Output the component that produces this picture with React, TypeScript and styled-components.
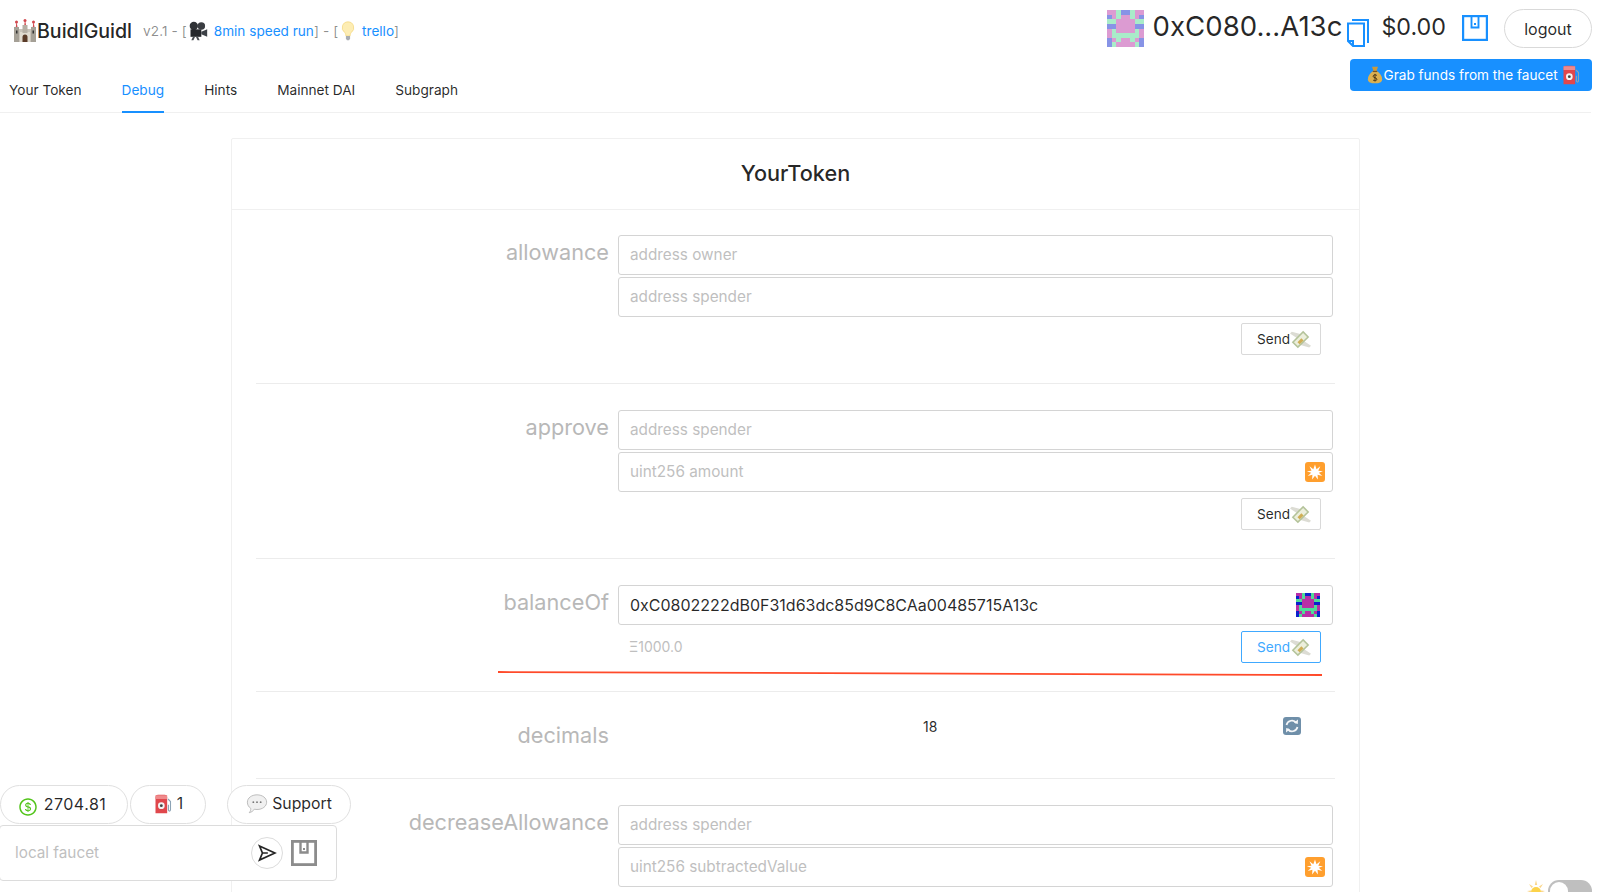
import React from "react";
import styled, { createGlobalStyle } from "styled-components";
import { AiOutlineDollarCircle } from "react-icons/ai";

const Global = createGlobalStyle`
  html, body { margin: 0; padding: 0; height: 892px; overflow: hidden; background: #fff; }
  body { font-family: Inter, "Liberation Sans", sans-serif; font-size: 14px; color: rgba(0,0,0,.85); }
  * { box-sizing: border-box; }
  input::placeholder { color: #bfbfbf; opacity: 1; font-size: 15.3px; }
`;

const Page = styled.div`
  position: relative;
  width: 1599px;
  height: 892px;
  overflow: hidden;
  padding-right: 8px;
`;

const Brand = styled.header`
  display: flex;
  align-items: center;
  height: 62px;
  padding-left: 13px;
`;
const BrandName = styled.span`
  display: flex;
  align-items: center;
  font-size: 19.6px;
  font-weight: 500;
  color: rgba(0,0,0,.87);
`;
const Version = styled.span`
  display: flex;
  align-items: center;
  margin: -1px 0 0 11px;
  font-size: 13.6px;
  letter-spacing: 0.1px;
  color: rgba(0,0,0,.45);
  white-space: pre;
`;
const TextLink = styled.span<{ $ml?: number }>`
  margin-left: ${(p) => p.$ml ?? 0}px;
  letter-spacing: 0;
  color: #1890ff;
`;

const Tabs = styled.nav`
  display: flex;
  gap: 40px;
  height: 51px;
  padding-left: 9px;
  border-bottom: 1px solid #f0f0f0;
`;
const Tab = styled.span<{ $active?: boolean }>`
  display: flex;
  align-items: center;
  height: 51px;
  padding-top: 6px;
  font-size: 13.65px;
  color: ${(p) => (p.$active ? "#1890ff" : "rgba(0,0,0,.85)")};
  border-bottom: 2px solid ${(p) => (p.$active ? "#1890ff" : "transparent")};
`;

const Wallet = styled.div`
  position: absolute;
  top: 0;
  right: 7px;
  display: flex;
  flex-direction: column;
  align-items: flex-end;
`;
const WalletRow = styled.div`
  display: flex;
  align-items: center;
  height: 59px;
  padding-bottom: 2px;
`;
const Address = styled.span`
  margin: -4px 5px 0 9px;
  font-size: 27.6px;
  line-height: 1;
  color: rgba(0,0,0,.85);
`;
const Balance = styled.span`
  margin-left: 12px;
  font-size: 23.3px;
  line-height: 1;
  margin-top: -4px;
  color: rgba(0,0,0,.85);
`;
const LogoutButton = styled.button`
  width: 88px;
  height: 39px;
  border: 1px solid #d9d9d9;
  border-radius: 20px;
  background: #fff;
  font: 16px Inter, sans-serif;
  color: rgba(0,0,0,.85);
`;
const FaucetButton = styled.button`
  display: flex;
  align-items: center;
  justify-content: center;
  width: 242px;
  height: 32px;
  padding: 0 0 0 5px;
  border: 0;
  border-radius: 4px;
  background: #1890ff;
  font: 13.6px Inter, sans-serif;
  color: #fff;
  white-space: pre;
`;

const Card = styled.section`
  width: 1129px;
  margin: 25px auto 0;
  border: 1px solid #f0f0f0;
  border-radius: 2px;
`;
const CardTitle = styled.h2`
  margin: 0;
  height: 71px;
  padding-bottom: 2px;
  display: flex;
  align-items: center;
  justify-content: center;
  border-bottom: 1px solid #f0f0f0;
  font-size: 21.7px;
  font-weight: 500;
  color: rgba(0,0,0,.85);
`;
const CardBody = styled.div`
  padding: 0 24px;
`;
const Fn = styled.div<{ $top: number; $bottom: number }>`
  position: relative;
  display: grid;
  grid-template-columns: 353px 715px;
  column-gap: 9px;
  padding: ${(p) => p.$top}px 0 ${(p) => p.$bottom}px;
  border-bottom: 1px solid #ececec;
`;
const FnLabel = styled.div`
  margin-top: -1px;
  font-size: 21.7px;
  line-height: 36px;
  text-align: right;
  color: #b8b8b8;
`;
const Fields = styled.div`
  display: flex;
  flex-direction: column;
  gap: 2px;
`;
const Field = styled.label`
  display: flex;
  align-items: center;
  height: 40px;
  padding: 0 7px 0 11px;
  border: 1px solid #d4d4d4;
  border-radius: 3px;
`;
const FieldInput = styled.input`
  flex: 1;
  min-width: 0;
  border: 0;
  outline: 0;
  padding: 0;
  background: transparent;
  font: 16px Inter, sans-serif;
  color: rgba(0,0,0,.85);
  &:placeholder-shown { padding-bottom: 2px; }
`;
const Footer = styled.div`
  display: flex;
  align-items: center;
  justify-content: space-between;
  margin-top: 4px;
  padding: 0 12px 0 11px;
`;
const Output = styled.span`
  margin-top: -2px;
  font-size: 14px;
  color: #bfbfbf;
`;
const SendButton = styled.button<{ $active?: boolean }>`
  display: flex;
  align-items: center;
  margin-left: auto;
  width: 80px;
  height: 32px;
  padding: 0 0 0 15px;
  border: 1px solid ${(p) => (p.$active ? "#40a9ff" : "#d9d9d9")};
  border-radius: 2px;
  background: #fff;
  font: 13.6px Inter, sans-serif;
  color: ${(p) => (p.$active ? "#40a9ff" : "rgba(0,0,0,.85)")};
`;
const Underline = styled.svg`
  position: absolute;
  left: 242px;
  bottom: 15px;
  width: 824px;
  height: 5px;
`;
const ReadRow = styled.div`
  display: flex;
  align-items: center;
  height: 34px;
  margin-top: -9px;
  padding-left: 305px;
  font-size: 14px;
`;
const ReadValue = styled.span`
  width: 360px;
  color: rgba(0,0,0,.85);
`;

const Pills = styled.div`
  position: absolute;
  left: 0;
  bottom: 11px;
  width: 351px;
`;
const PillRow = styled.div`
  display: flex;
  height: 39px;
`;
const Pill = styled.button<{ $w: number; $gap?: number; $inset?: number }>`
  display: flex;
  align-items: center;
  justify-content: center;
  gap: 4px;
  width: ${(p) => p.$w}px;
  height: 39px;
  margin-left: ${(p) => p.$gap ?? 0}px;
  padding: 0 ${(p) => p.$inset ?? 0}px 2px 0;
  border: 1px solid #e0e0e0;
  border-radius: 20px;
  background: #fff;
  font: 15.8px Inter, sans-serif;
  color: rgba(0,0,0,.85);
`;
const Amount = styled.span`
  font-size: 16px;
  letter-spacing: 0.5px;
`;
const Dollar = styled(AiOutlineDollarCircle)`
  margin: 6px 2px 0 0;
  color: #52c41a;
`;
const FaucetBox = styled.div`
  display: flex;
  align-items: center;
  width: 338px;
  height: 56px;
  margin: 1px 0 0 -1px;
  padding: 0 19px 0 15px;
  border: 1px solid #dcdcdc;
  border-radius: 4px;
  background: #fff;
`;
const RoundIcon = styled.span`
  display: flex;
  align-items: center;
  justify-content: center;
  width: 32px;
  height: 32px;
  margin: 0 8px;
  border: 1px solid #dcdcdc;
  border-radius: 50%;
`;

const ThemeDock = styled.div`
  position: absolute;
  right: 7px;
  top: 880px;
  display: flex;
  align-items: flex-start;
  gap: 3px;
`;
const Switch = styled.span`
  position: relative;
  display: block;
  width: 44px;
  height: 22px;
  border-radius: 11px;
  background: #bfbfbf;
  &::after {
    content: "";
    position: absolute;
    left: 2px;
    top: 2px;
    width: 18px;
    height: 18px;
    border-radius: 50%;
    background: #fff;
  }
`;
const Glyph = styled.svg<{ $s: number; $mx?: number; $mt?: number; $mr?: number }>`
  flex: none;
  width: ${(p) => p.$s}px;
  height: ${(p) => p.$s}px;
  margin: ${(p) => p.$mt ?? 0}px ${(p) => p.$mr ?? p.$mx ?? 0}px 0 ${(p) => p.$mx ?? 0}px;
`;
const CopyGlyph = styled.svg`
  flex: none;
  width: 22px;
  height: 28px;
  margin-top: 9px;
`;

type G = { s: number; mx?: number };

const Castle = ({ s, mx }: G) => (
  <Glyph $s={s} $mx={mx} viewBox="0 0 24 24">
    <path d="M3 10h18v13H3z" fill="#c9c4ba" />
    <path d="M7 13h10v10H7z" fill="#e0dbd0" />
    <path d="M1 8h5v15H1zM18 8h5v15h-5z" fill="#a5a096" />
    <path d="M9.500 6h5v8h-5z" fill="#b5afa4" />
    <path d="M2.800 8 3.500 2l1 6zM19.800 8l.7-6 1 6zM11.300 6l.7-6 1 6z" fill="#d2484e" />
    <circle cx="3.500" cy="3" r="1.500" fill="#d2484e" />
    <circle cx="20.500" cy="3" r="1.500" fill="#d2484e" />
    <circle cx="12" cy="1.500" r="1.500" fill="#d2484e" />
    <path d="M9.500 23v-5a2.500 2.500 0 0 1 5 0v5z" fill="#5a3b28" />
    <path d="M3 11.500h1.500v3H3zM19.500 11.500H21v3h-1.500z" fill="#333" />
  </Glyph>
);
const Camera = ({ s, mx }: G) => (
  <Glyph $s={s} $mx={mx} viewBox="0 0 24 24">
    <circle cx="7" cy="6" r="5" fill="#2f3236" />
    <circle cx="16" cy="6" r="4.500" fill="#3a3d42" />
    <path d="M3 10h13v9H3z" fill="#26282c" />
    <path d="m16 13 7-3v9l-7-3z" fill="#3c4046" />
    <path d="m6 19-2 4h2.500l2-4zM12 19l2 4h-2.500l-2-4z" fill="#4a4d52" />
  </Glyph>
);
const Bulb = ({ s, mx }: G) => (
  <Glyph $s={s} $mx={mx} viewBox="0 0 24 24">
    <path d="M12 1a7 7 0 0 0-4 12.700c1 1 1.500 2.300 1.500 4.300h5c0-2 .5-3.300 1.500-4.300A7 7 0 0 0 12 1z" fill="#fdedb4" stroke="#f3d578" strokeWidth=".8" />
    <path d="M9.500 18h5v3l-1.200 2h-2.600l-1.200-2z" fill="#a9adb2" />
  </Glyph>
);
const MoneyBag = ({ s, mx }: G) => (
  <Glyph $s={s} $mx={mx} viewBox="0 0 24 24">
    <path d="M8 1h8l-2 6h-4z" fill="#c99a3e" />
    <path d="M9 7h6c4 3 6.500 7 6.500 10.500C21.500 21.500 18 23 12 23s-9.500-1.500-9.500-5.500C2.500 14 5 10 9 7z" fill="#dcb04f" />
    <path d="M9 6.500h6v1.600H9z" fill="#7a5320" />
    <path d="M14.500 12.500c-2-1.200-5-.8-5 1.200 0 2.500 5 1.500 5 4 0 2-3 2.300-5 1.200M12 10.500v10" fill="none" stroke="#3d2b10" strokeWidth="1.200" />
  </Glyph>
);
const Pump = ({ s, mx }: G) => (
  <Glyph $s={s} $mx={mx} viewBox="0 0 24 24">
    <path d="M3 4c0-2 1-3 3-3h8c2 0 3 1 3 3v19H3z" fill="#e0474c" />
    <path d="M3 1.500h14V6H3z" fill="#ef8a8c" />
    <circle cx="10" cy="14" r="4" fill="#f4f4f4" />
    <circle cx="10" cy="14" r="1.700" fill="#444" />
    <path d="M18 6l3 3v10c0 2-2.500 2-2.500 0v-6" fill="none" stroke="#8ca3b5" strokeWidth="1.300" />
  </Glyph>
);
const FlyingMoney = ({ s, mx }: G) => (
  <Glyph $s={s} $mx={mx} viewBox="0 0 24 24">
    <path d="M9 11 0 5l2-2 11 3zM15 13l9 6-2 2-11-3z" fill="#dcdcd4" />
    <path d="M2 15 15 2l7 7L9 22z" fill="#b4c39a" />
    <path d="M4.500 15 15 4.500l4.500 4.500L9 19.500z" fill="#ecefdc" />
    <path d="M8.500 15 13 10.500l2.500 2.500-4.500 4.500z" fill="#cfae55" />
  </Glyph>
);
const Spark = ({ s, mx }: G) => (
  <Glyph $s={s} $mx={mx} viewBox="0 0 20 20">
    <rect width="20" height="20" rx="3" fill="#ff9f2e" />
    <path d="m10 2.500 1.500 4.700 3.800-3-2 4.500 4.700.5-4.200 1.500 3.500 3.400-4.700-1.300.3 4.700-2.900-3.700-2.900 3.700.3-4.700-4.700 1.300 3.500-3.400L1.800 9.200l4.700-.5-2-4.500 3.800 3z" fill="#fff" />
  </Glyph>
);
const Refresh = ({ s, mx }: G) => (
  <Glyph $s={s} $mx={mx} viewBox="0 0 18 18">
    <rect width="18" height="18" rx="3" fill="#6f8fa9" />
    <path d="M3.500 8a5.600 5.600 0 0 1 10-2M14.500 10a5.600 5.600 0 0 1-10 2" fill="none" stroke="#f4f6f8" strokeWidth="1.700" />
    <path d="m15 2.500-.2 4.500-4-1.300zM3 15.500l.2-4.500 4 1.300z" fill="#f4f6f8" />
  </Glyph>
);
const Balloon = ({ s, mx }: G) => (
  <Glyph $s={s} $mx={mx} viewBox="0 0 24 24">
    <path d="M12 2c6 0 10.500 3.500 10.500 8S18 18 12 18c-1 0-2-.1-3-.3C8 19.500 6 21 3.500 21.500c1.200-1.300 1.800-3 1.700-4.700C3 15.300 1.500 13 1.500 10 1.500 5.500 6 2 12 2z" fill="#f0f0f0" stroke="#b8b8b8" />
    <circle cx="8" cy="10" r="1" fill="#777" />
    <circle cx="12" cy="10" r="1" fill="#777" />
    <circle cx="16" cy="10" r="1" fill="#777" />
  </Glyph>
);
const Sun = ({ s, mx }: G) => (
  <Glyph $s={s} $mx={mx} viewBox="0 0 18 18">
    <circle cx="9" cy="12" r="5" fill="#fcd34a" />
    <path d="m9 0 1.200 5H7.800zM2 4l4 2.500L4.500 8zM16 4l-4 2.500L13.500 8zM0 11l4-.5v2zM18 11l-4-.5v2z" fill="#fbd68a" />
  </Glyph>
);
const Plane = () => (
  <Glyph $s={20} viewBox="0 0 24 24">
    <path d="M3 3.500 21.500 12 3 20.500 6.500 12zM6.500 12H13" fill="none" stroke="#262626" strokeWidth="2" />
  </Glyph>
);
const CopyMark = () => (
  <CopyGlyph viewBox="0 0 22 28">
    <path d="M5 1h16v23" fill="none" stroke="#1890ff" strokeWidth="2" />
    <path d="M1 4.500h16v22.500H6l-5-5z" fill="#fff" stroke="#1890ff" strokeWidth="2" />
    <path d="M1 22h5v5" fill="none" stroke="#1890ff" strokeWidth="2" />
  </CopyGlyph>
);
const Tag = ({ color, sw, mx, mt }: { color: string; sw: number; mx?: number; mt?: number }) => (
  <Glyph $s={26} $mx={mx} $mt={mt} viewBox="0 0 26 26">
    <rect x={sw / 2} y={sw / 2} width={26 - sw} height={26 - sw} fill="none" stroke={color} strokeWidth={sw} />
    <path d="M9.500 1v11.500h7V1" fill="none" stroke={color} strokeWidth={sw * 0.85} />
    <rect x="12" y="8" width="2" height="2" fill={color} />
  </Glyph>
);

const PATTERN = [
  "MMGBBGMM",
  "BMGMMGMB",
  "GGMMMMGG",
  "BBMMMMBB",
  "MGMMMMGM",
  "MGGGGGGM",
  "BMGMMGMB",
  "BGMMMMGB",
];
const Blockie = ({ s, pale, mr }: { s: number; pale?: boolean; mr?: number }) => {
  const c: Record<string, string> = pale
    ? { M: "#dc9bd2", G: "#a9ecc9", B: "#8793e6" }
    : { M: "#b92fa6", G: "#50dc98", B: "#0a22cc" };
  return (
    <Glyph $s={s} $mr={mr} viewBox="0 0 8 8" shapeRendering="crispEdges">
      {PATTERN.flatMap((row, y) =>
        row.split("").map((k, x) => <rect key={`${x}-${y}`} x={x} y={y} width="1.02" height="1.02" fill={c[k]} />)
      )}
    </Glyph>
  );
};

const Send = ({ active }: { active?: boolean }) => (
  <SendButton $active={active}>
    Send
    <FlyingMoney s={21} />
  </SendButton>
);

export default function App() {
  return (
    <Page>
      <Global />
      <Brand>
        <BrandName>
          <Castle s={24} />
          BuidlGuidl
        </BrandName>
        <Version>
          v2.1 - [<Camera s={20} mx={1} />
          <TextLink $ml={1}> 8min speed run</TextLink>] - [<Bulb s={20} />
          <TextLink> trello</TextLink>]
        </Version>
      </Brand>
      <Tabs>
        <Tab>Your Token</Tab>
        <Tab $active>Debug</Tab>
        <Tab>Hints</Tab>
        <Tab>Mainnet DAI</Tab>
        <Tab>Subgraph</Tab>
      </Tabs>

      <Wallet>
        <WalletRow>
          <Blockie s={37} pale />
          <Address>0xC080...A13c</Address>
          <CopyMark />
          <Balance>$0.00</Balance>
          <Tag color="#1890ff" sw={2.2} mx={16} mt={-2} />
          <LogoutButton>logout</LogoutButton>
        </WalletRow>
        <FaucetButton>
          <MoneyBag s={18} />
          Grab funds from the faucet <Pump s={20} />
        </FaucetButton>
      </Wallet>

      <Card>
        <CardTitle>YourToken</CardTitle>
        <CardBody>
          <Fn $top={25} $bottom={28}>
            <FnLabel>allowance</FnLabel>
            <Fields>
              <Field><FieldInput placeholder="address owner" /></Field>
              <Field><FieldInput placeholder="address spender" /></Field>
              <Footer><Send /></Footer>
            </Fields>
          </Fn>
          <Fn $top={26} $bottom={28}>
            <FnLabel>approve</FnLabel>
            <Fields>
              <Field><FieldInput placeholder="address spender" /></Field>
              <Field><FieldInput placeholder="uint256 amount" /><Spark s={20} /></Field>
              <Footer><Send /></Footer>
            </Fields>
          </Fn>
          <Fn $top={26} $bottom={28}>
            <FnLabel>balanceOf</FnLabel>
            <Fields>
              <Field>
                <FieldInput readOnly value="0xC0802222dB0F31d63dc85d9C8CAa00485715A13c" />
                <Blockie s={24} mr={5} />
              </Field>
              <Footer>
                <Output>Ξ1000.0</Output>
                <Send active />
              </Footer>
            </Fields>
            <Underline viewBox="0 0 824 5" preserveAspectRatio="none">
              <path d="M0 1 824 4" stroke="#ff4a2a" strokeWidth="1.800" />
            </Underline>
          </Fn>
          <Fn $top={26} $bottom={25}>
            <FnLabel>decimals</FnLabel>
            <ReadRow>
              <ReadValue>18</ReadValue>
              <Refresh s={18} />
            </ReadRow>
          </Fn>
          <Fn $top={26} $bottom={27}>
            <FnLabel>decreaseAllowance</FnLabel>
            <Fields>
              <Field><FieldInput placeholder="address spender" /></Field>
              <Field><FieldInput placeholder="uint256 subtractedValue" /><Spark s={20} /></Field>
            </Fields>
          </Fn>
        </CardBody>
      </Card>

      <Pills>
        <PillRow>
          <Pill $w={128} $inset={4}>
            <Dollar size={20} />
            <Amount>2704.81</Amount>
          </Pill>
          <Pill $w={76} $gap={2}>
            <Pump s={20} />1
          </Pill>
          <Pill $w={124} $gap={21}>
            <Balloon s={22} />Support
          </Pill>
        </PillRow>
        <FaucetBox>
          <FieldInput placeholder="local faucet" />
          <RoundIcon><Plane /></RoundIcon>
          <Tag color="#8c8c8c" sw={2.8} />
        </FaucetBox>
      </Pills>

      <ThemeDock>
        <Sun s={18} />
        <Switch />
      </ThemeDock>
    </Page>
  );
}
